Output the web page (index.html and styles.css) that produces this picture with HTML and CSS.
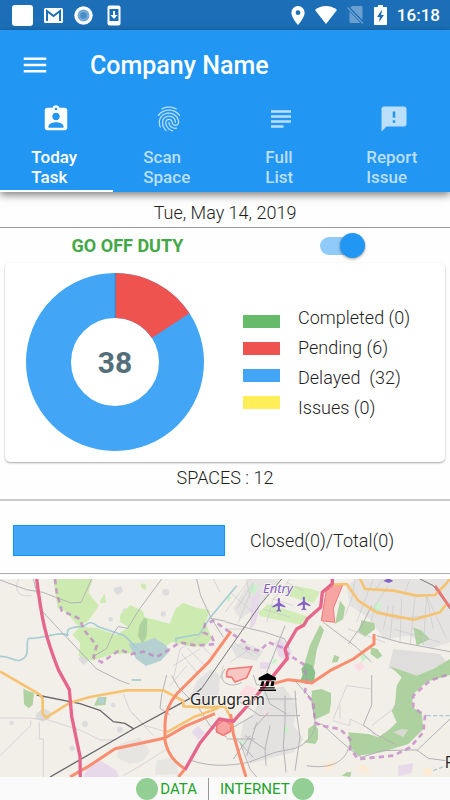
FILE: index.html
```html
<!DOCTYPE html>
<html lang="en">
<head>
<meta charset="utf-8">
<meta name="viewport" content="width=device-width, initial-scale=1">
<title>Company Name</title>
<link rel="stylesheet" href="styles.css">
</head>
<body>
<div class="status">
  <div class="status-group status-left">
    <svg width="21" height="21" viewBox="0 0 21 21"><rect width="21" height="21" rx="3" fill="#fff"/></svg>
    <svg width="19" height="15" viewBox="0 0 19 15"><rect width="19" height="15" rx="1.5" fill="#fff"/><path d="M3 13V3l6.500 5L16 3v10" fill="none" stroke="#1c6fb6" stroke-width="2"/></svg>
    <svg width="19" height="19" viewBox="0 0 19 19"><circle cx="9.500" cy="9.500" r="9.200" fill="#fff"/><circle cx="9.500" cy="9.500" r="6" fill="#75a9d6"/><circle cx="9.500" cy="9.500" r="3.300" fill="#4a8ec9"/></svg>
    <svg width="14" height="21" viewBox="0 0 14 21"><rect x=".5" y=".5" width="13" height="20" rx="2" fill="#fff"/><path d="M2.500 4h9v12h-9z" fill="#1c6fb6"/><path d="M6 6h2v4h2.500L7 14l-3.500-4H6z" fill="#fff"/></svg>
  </div>
  <div class="status-group status-right">
    <svg class="pin" width="14" height="19" viewBox="0 0 14 20"><path fill="#fff" fill-rule="evenodd" d="M7 0a7 7 0 0 0-7 7c0 5 7 13 7 13s7-8 7-13a7 7 0 0 0-7-7zm0 4.500a2.500 2.500 0 1 1 0 5 2.500 2.500 0 0 1 0-5z"/></svg>
    <svg class="wifi" width="22" height="18" viewBox="0 0 22 18"><path fill="#fff" d="M0 4C6-1.300 16-1.300 22 4L11 18z"/></svg>
    <svg class="sim" width="17" height="18" viewBox="0 0 17 18"><path fill="#6b9fd0" d="M3.500 1.700L5 0h9c1 0 1.500.5 1.500 1.500V14zM2.500 5.500l11 11.500H4c-1 0-1.500-.5-1.500-1.500z"/><path d="M.5 1.500l15.500 16" stroke="#6b9fd0" stroke-width="1.300"/></svg>
    <svg class="battery" width="13" height="20" viewBox="0 0 13 20"><path fill="#fff" fill-rule="evenodd" d="M4 0h5v2h3c.6 0 1 .4 1 1v16c0 .6-.4 1-1 1H1c-.6 0-1-.4-1-1V3c0-.6.4-1 1-1h3zM8 4.500L3 12h2.800L5 17l5-7H7.200z"/></svg>
    <span class="clock">16:18</span>
  </div>
</div>
<header class="appbar">
  <div class="toolbar">
    <button class="menu" type="button" aria-label="Menu"><svg width="30" height="30" viewBox="0 0 24 24"><path fill="#fff" d="M3 18h18v-2H3v2zm0-5h18v-2H3v2zm0-7v2h18V6H3z"/></svg></button>
    <h1 class="title">Company Name</h1>
  </div>
  <nav class="tabs">
    <a class="tab active" href="#today"><svg width="30" height="30" viewBox="0 0 24 24"><path d="M19 3h-4.180C14.400 1.840 13.300 1 12 1c-1.300 0-2.400.84-2.820 2H5c-1.100 0-2 .9-2 2v14c0 1.100.9 2 2 2h14c1.100 0 2-.9 2-2V5c0-1.100-.9-2-2-2zm-7 0c.55 0 1 .45 1 1s-.45 1-1 1-1-.45-1-1 .45-1 1-1zm0 4c1.660 0 3 1.340 3 3s-1.340 3-3 3-3-1.340-3-3 1.340-3 3-3zm6 12H6v-1.400c0-2 4-3.100 6-3.100s6 1.100 6 3.100V19z"/></svg><span>Today<br>Task</span></a>
    <a class="tab" href="#scan"><svg width="30" height="30" viewBox="0 0 24 24"><path d="M17.810 4.470c-.08 0-.16-.02-.23-.06C15.660 3.420 14 3 12.010 3c-1.980 0-3.860.47-5.570 1.410-.24.13-.54.04-.68-.2-.13-.24-.04-.55.2-.68C7.820 2.520 9.860 2 12.010 2c2.130 0 3.990.47 6.030 1.520.25.13.34.43.21.67-.09.18-.26.28-.44.28zM3.500 9.720c-.1 0-.2-.03-.29-.09-.23-.16-.28-.47-.12-.7.99-1.400 2.250-2.500 3.750-3.270C9.980 4.040 14 4.030 17.150 5.650c1.500.77 2.760 1.860 3.750 3.250.16.22.11.54-.12.7-.23.16-.54.11-.7-.12-.9-1.260-2.040-2.250-3.390-2.940-2.870-1.470-6.540-1.470-9.400.01-1.360.7-2.500 1.700-3.400 2.960-.08.14-.23.21-.39.21zm6.250 12.070c-.13 0-.26-.05-.35-.15-.87-.87-1.340-1.430-2.010-2.640-.69-1.230-1.050-2.730-1.050-4.340 0-2.970 2.540-5.390 5.660-5.390s5.660 2.420 5.660 5.390c0 .28-.22.5-.5.5s-.5-.22-.5-.5c0-2.420-2.090-4.390-4.660-4.390-2.570 0-4.660 1.970-4.660 4.390 0 1.440.32 2.770.93 3.850.64 1.150 1.080 1.640 1.850 2.420.19.2.19.51 0 .71-.11.1-.24.15-.37.15zm7.170-1.850c-1.190 0-2.240-.3-3.100-.89-1.490-1.010-2.380-2.650-2.380-4.390 0-.28.22-.5.5-.5s.5.22.5.5c0 1.410.72 2.740 1.940 3.560.71.48 1.540.71 2.540.71.24 0 .64-.03 1.040-.1.27-.05.53.13.58.41.05.27-.13.53-.41.58-.57.11-1.070.12-1.210.12zM14.910 22c-.04 0-.09-.01-.13-.02-1.590-.44-2.630-1.030-3.720-2.100-1.400-1.390-2.170-3.240-2.170-5.220 0-1.620 1.380-2.940 3.080-2.940 1.700 0 3.080 1.320 3.080 2.940 0 1.070.93 1.940 2.080 1.940s2.080-.87 2.080-1.940c0-3.770-3.250-6.830-7.250-6.830-2.840 0-5.440 1.580-6.610 4.030-.39.81-.59 1.760-.59 2.800 0 .78.07 2.010.67 3.610.1.26-.03.55-.29.64-.26.1-.55-.04-.64-.29-.49-1.310-.73-2.610-.73-3.960 0-1.200.23-2.290.68-3.240 1.330-2.790 4.280-4.600 7.510-4.600 4.550 0 8.250 3.510 8.250 7.830 0 1.620-1.380 2.940-3.080 2.940s-3.080-1.320-3.080-2.940c0-1.070-.93-1.940-2.080-1.940s-2.080.87-2.080 1.940c0 1.710.66 3.310 1.870 4.510.95.94 1.860 1.460 3.270 1.850.27.07.42.35.35.61-.05.23-.26.38-.47.38z"/></svg><span>Scan<br>Space</span></a>
    <a class="tab" href="#list"><svg width="30" height="30" viewBox="0 0 24 24"><path d="M14 17H4v2h10v-2zm6-8H4v2h16V9zM4 15h16v-2H4v2zM4 5v2h16V5H4z"/></svg><span>Full<br>List</span></a>
    <a class="tab" href="#report"><svg width="30" height="30" viewBox="0 0 24 24"><path d="M20 2H4c-1.100 0-1.990.9-1.990 2L2 22l4-4h14c1.100 0 2-.9 2-2V4c0-1.100-.9-2-2-2zm-7 9h-2V6h2v5zm0 4h-2v-2h2v2z"/></svg><span>Report<br>Issue</span></a>
  </nav>
</header>
<main class="content">
  <p class="date">Tue, May 14, 2019</p>
  <div class="duty">
    <button class="duty-button" type="button">GO OFF DUTY</button>
    <input class="switch" type="checkbox" role="switch" aria-label="On duty" checked>
  </div>
  <section class="card">
    <svg class="donut" width="178" height="178" viewBox="0 0 178 178">
      <circle cx="89" cy="89" r="66.500" fill="none" stroke="#42a5f5" stroke-width="45"/>
      <path fill="#ef5350" d="M89 0A89 89 0 0 1 163.500 40.300L125.800 64.900A44 44 0 0 0 89 45z"/>
      <path d="M89 0v45" stroke="#0a98f0" stroke-width="1"/>
      <text class="donut-total" x="89" y="100" text-anchor="middle">38</text>
    </svg>
    <div class="swatches">
      <span class="swatch green"></span>
      <span class="swatch red"></span>
      <span class="swatch blue"></span>
      <span class="swatch yellow"></span>
    </div>
    <ul class="legend">
      <li>Completed (0)</li>
      <li>Pending (6)</li>
      <li>Delayed&nbsp; (32)</li>
      <li>Issues (0)</li>
    </ul>
  </section>
  <p class="spaces">SPACES : 12</p>
  <section class="progress">
    <div class="bar"></div>
    <p class="progress-text">Closed(0)/Total(0)</p>
  </section>
  <svg class="map" viewBox="0 0 1350 594" preserveAspectRatio="xMidYMid slice" role="img" aria-label="Map of Gurugram">
    <rect width="1350" height="594" fill="#f2efe9"/>
    <!-- built-up land -->
    <g fill="#dfdedd">
      <path d="M750 0h90l-60 80-60 40-20-30zM1040 20l30-20h280v190l-60 20-60-40-80 10-40-60-60-40z" opacity=".7"/>
      <path d="M595 300l40-30 25 20-5 60-45 30-40-30zM690 200l40-10 60 25-20 30-60-10zM790 340l60-20 40 60-10 60 30 40-30 40-60 15-70 20-30-70 10-60 30-20z" opacity=".75"/>
      <path d="M1180 210l50 5 90 10 25 30-45 20-50 20-85-28-5 25z"/>
      <path d="M360 495l60-20 30 40-20 30-40 10-40-20zM470 545l55-10 10 50-70 2z" opacity=".65"/>
    </g>
    <g fill="#dcdbdd">
      <path d="M222 5l20-5 8 20-18 8-14-8zM343 27l20-5 7 14-16 12-12-10zM234 240l22-22 18 20-24 20zM110 402l20-14 22 10-2 20-24 10-20-10z"/>
      <circle cx="497" cy="40" r="10"/><circle cx="375" cy="95" r="7"/><circle cx="237" cy="82" r="10"/><circle cx="490" cy="105" r="8"/><circle cx="570" cy="107" r="9"/><circle cx="400" cy="150" r="11"/><circle cx="478" cy="164" r="9"/><circle cx="270" cy="160" r="7"/><circle cx="332" cy="121" r="7"/><circle cx="216" cy="508" r="8"/><circle cx="255" cy="435" r="9"/><circle cx="340" cy="378" r="7"/><circle cx="35" cy="432" r="7"/><circle cx="360" cy="452" r="9"/><circle cx="225" cy="449" r="6"/>
    </g>
    <g fill="#e7d9e9"><path d="M260 570l40-26 48 30 10 20H250zM575 460l20-20 20 22-20 20zM755 60l22-30v70l-14 40-14 10zM1195 560l45-8-5 30-40 10zM825 190l20-10 30 40-10 30-30-20zM780 250h30v20h-30z"/></g>
    <g fill="#fbdce0"><path d="M720 340l20-22 30 10-15 30-35 10zM1062 258l20-10 12 16-18 14zM790 400l12-6 5 15-12 5z"/></g>
    <path fill="#fdebd3" d="M970 555l35-12-5 30-20-2zM1070 565l25-8 15 20-20 5zM1270 565l30 5-5 20-25-5z"/>
    <!-- woods and parks -->
    <g fill="#cdebb0">
      <path d="M160 0h118l-13 41 32 39-32 45-28 18-40-45-24-10z"/>
      <path d="M240 143l50 4 60 21 35-23-26-17 2-22 30-28 38 18 5 18 75 20 18-45 22-18 42 16 40 7-15 35 20 50-19 20-40 5-60-15-50 30-95 5-30 0-66 21-40-15 5-38-24-25z"/>
      <path d="M775 100l30-25 125 40-20 24-130-28zM865 18l60 10 35 10-20 35-85-25z" opacity=".9"/>
      <path d="M302 63l12-20 4 28-18 2zM422 14l14 0 4 20-14-6z"/>
    </g>
    <g fill="#aed1a0">
      <path d="M418 140l14-24 10 5-2 50-12 24-14-24zM70 328l8 6 24 8-4 36-12 10-14-12z"/>
      <path d="M282 380l12-26 26 0-4 24z"/>
      <path d="M1020 65l15 20-5 35-25 15zM1085 124l38 8 2 18-30 23-20-15zM1240 145l25 10 25 25-40 20zM1112 205l20 5 15 20-15 10-20-15z"/>
      <path d="M960 138l12 15-22 60-8 50-30-5 18-60z"/>
      <path d="M935 335l30-5 28 12v30l-5 30-43 20-10-40zM912 490l12-10 0-30 20-15 10 15 0 30-8 15z"/>
      <path d="M1170 262l80 28 50-20 50-30v48l-70 20-40 37-5 40 30 15 5 50-45 45-80 25-70 10-25-25-5-45 60 5 30 10 35-25 20-20-15-35 10-20 5-55 15-25-35-33z"/>
      <path d="M1025 590l15-10h15l-5 14zM1003 228l15 5-5 15-18 3z"/>
    </g>
    <path d="M1180 460l25-10 20 2-15 22z" fill="#d9dbd2"/>
    <path fill="#8ac18a" d="M918 252l20 8 8 20-4 30-20 5-22-8 8-20-4-18z"/>
    <g fill="#c9f2cc"><path d="M755 15l18 5-8 25-20-10zM680 50l15 5-10 15zM1125 75l20-5-5 25-20 5zM820 240l12 0-5 12-12 5zM850 440l12 0 5 20-15 5zM1080 220l25 15-20 15zM717 490l15-5 5 8-15 7zM1320 80l15 10-15 15z"/></g>
    <g fill="#b5d0d0"><path d="M385 195l45-5 33-14 35 23 10 18-25 28-45 16-30-22zM295 355l18 0 0 20-18-4zM395 300h28v6h-28z"/></g>
    <path d="M0 232c30-2 40 16 58 12 40-10 15-56 28-66 40 4 100-26 118-7-10-30 20-24 48-30 20-16 25-10 43 2l75 26c20 10 25 30 45 40M528 190l0-12 70-12 32-50 35-42 45-54" fill="none" stroke="#a5cdd2" stroke-width="5"/>
    <path d="M1280 410h70M1300 575l50-20" fill="none" stroke="#a5cdd2" stroke-width="4" stroke-dasharray="12 7"/>
    <!-- minor streets -->
    <g fill="none" stroke="#c9c9cb" stroke-width="2">
      <path d="M55 0c-12 30-5 55 40 50M0 417h90l45 6M92 425v15L20 510 0 530M118 430v50h12v114M135 420l110 35 55 28h40M370 345l20 50 70 75M370 590l60-35 70-45M395 400l40 40 70 20M640 0l20 40"/>
      <path d="M675 100l45-60 30-40M690 40l70 60M710 90l50-80M675 150h60M760 20l-45 110M740 0l10 60M800 130l20-70 50-60M820 60l60 20M790 90l80 25M860 10l50 25"/>
      <path d="M1035 110l20-50 10-60M1070 130l30-80 20-50M1110 140l15-60 40-60M1150 150l15-70M1170 180l10-100M1200 190l5-130M1230 200l15-150M1270 200l10-150M1300 150l-20-100M1340 180l-60-130M1080 70l110 50 90-10M1045 150l110 40M1180 150l140 40M1150 0l-30 40M1230 0l-15 40"/>
      <path d="M520 300l20-90 40-25 30-20M545 225l50 60M560 205l60 60M590 185l50 50M520 260l80-50M510 320l50-60M690 250l60-40 30 20M700 190l60 40M660 300l10-40"/>
      <path d="M1040 320l-40 100M1040 320l75 10M1000 425l50 15 0-20 60 30 15 20M1115 440l90-70M1020 420v-40"/>
    </g>
    <g fill="none" stroke="#b3b3b6" stroke-width="3">
      <path d="M0 3l80 29 48 8 85 32 30-2L275 0M485 0l-65 88-37 60-28-5-15 20-20 45-40 25M125 95l70 75 95 100 70 35 28 10M100 0l12 48M590 0l12 50 30 65 38 60M632 118l43 8"/>
      <path d="M500 288l-15 60-5 40 30 20M515 290l20 35 60 60 35 55 50 35"/>
      <path d="M675 128l70 20 48 11 60 20 15 30M970 130l100 75 45 45M1115 80l-30 60-40 55M1130 170l70 20 150 28M855 140l-35 90-20 50"/>
      <path d="M675 270c-30 40 20 60 50 40M760 288l10 30 50 0M790 325l20 50 50 30M720 370l60 40h120M800 360h90M690 450l70-40M810 440l-15 70 3 50M735 470l60 40M855 350v80l-5 70 8 80M700 470l60 65M760 450l45-50M885 335l5 70 10 70-15 100M720 490l30 80 20 24M770 430l-30 100M700 540l50-70M680 480l85 0"/>
      <path d="M575 545c60 20 120 15 170 5l80-30 60-12c30-10 60-40 60-70l20-3 50 45 40 35 30 20 60-20 85-2 20 0 35 25 60 8 20 10M1115 288l0 90-25 60 40 30 60 30M1250 515l100-95M920 560c60 10 110-5 125-50M880 300l55 60 12 80"/>
    </g>
    <path d="M110 348l130 26 60 20 40 34 35 5 25 16M150 594L400 450l170-92 35-30" fill="none" stroke="#68686b" stroke-width="4"/>
    <path d="M605 328l70-100 105-150L845 0M1260 0l40 20 50 70" fill="none" stroke="#777779" stroke-width="3"/>
    <!-- administrative boundary -->
    <path d="M165 0l5 40 15 55 55 25 10 30 40 50-10 35 25 15 55-38 35 13 35-7 40 16 40-24 30-20 50 10 55-5-10-23-25-12 5-25 25-10 50 35 45 30 5 18 40 7 25-25 40 15 25 25 40 25 10 40-5 45 25 30 5 60 20 10 55 10 30 30v30l25 30 105-10 50-25 40-45 5-50-35-25v-35l50-45 60-20" fill="none" stroke="#c184c4" stroke-opacity=".75" stroke-width="8" stroke-dasharray="16 12"/>
    <!-- built attractions -->
    <g fill="#f7a5a3" stroke="#f27976" stroke-width="3">
      <path d="M978 38l24-20h26l-28 70 4 42-40-5z"/>
      <path d="M680 280l5-10 70-7-15 33-35 13-10-14-15-2z" fill="#f9c7c3" stroke-width="5"/>
      <path d="M650 440l20-18 24 15-2 20-22 12-20-10z" stroke-width="5"/>
    </g>
    <!-- main roads -->
    <path d="M0 277l120 70 8 12 0 45 10 12 72-45 60-17 110-20h110l60 32v16l75 3 50-3 20 40M500 460l80-45 75-28M1000 17l40-2 35 50 55 36 110 21 80-22 20-25M1080 0l15 30 85 5 70 15 55-2 30-30 15-18" fill="none" stroke="#f6c373" stroke-width="8" stroke-linejoin="round"/>
    <g fill="none" stroke="#f88d70" stroke-width="9" stroke-linejoin="round">
      <path d="M210 594l60-35 75-50 150-32 60-35 90-38M693 157l-65 90-98 98c-25 30-35 55-35 90v50c10 45 30 65 60 85l-20 24M1122 165v30l-62 45-70 35-55 37-35-6-35-4-45 12M692 405l8 60 20 70 18 59"/>
      <path d="M1305 20l45 65" stroke="#ee7775" stroke-width="8"/>
    </g>
    <g fill="none" stroke="#e5668a" stroke-width="10" stroke-linejoin="round">
      <path d="M110 0c15 120 25 170 65 272l33 60 7 80 25 120 1 62"/>
      <path d="M997 0l0 14-30 26-5 45-40 35-10 18-22 12-35 60 7 28-42 52-55 65-65 72-42-7-58 72-45 80"/>
    </g>
    <!-- places -->
    <g fill="#8461c4">
      <path transform="translate(813 53) scale(2.050)" d="M21 16v-2l-8-5V3.500c0-.83-.67-1.500-1.500-1.500S10 2.670 10 3.500V9l-8 5v2l8-2.500V19l-2 1.500V22l3.500-1 3.500 1v-1.500L13 19v-5.500l8 2.500z"/>
      <path transform="translate(888 49) scale(2.050)" d="M21 16v-2l-8-5V3.500c0-.83-.67-1.500-1.500-1.500S10 2.670 10 3.500V9l-8 5v2l8-2.500V19l-2 1.500V22l3.500-1 3.500 1v-1.500L13 19v-5.500l8 2.500z"/>
      <path d="M1150 6l10-6h10l10 6-14 6z"/>
    </g>
    <path transform="translate(776 282) scale(1 .93)" d="M26 0L0 15v8h52v-8zM9 27l-4 15h9l3-15zm14 0l-3 15h9l3-15zm15 0l-2 15h9l2-15zM4 46h44v4H4zM0 53h52v5H0z"/>
    <text class="map-label entry" x="789" y="42">Entry</text>
    <text class="map-label city" x="570" y="377">Gurugram</text>
    <text class="map-label city" x="1334" y="567">F</text>
  </svg>
</main>
<footer class="footer">
  <span class="signal"><i class="dot"></i>DATA</span>
  <span class="signal internet">INTERNET<i class="dot"></i></span>
</footer>
</body>
</html>
```

FILE: styles.css
```css
* { box-sizing: border-box; }
body {
  margin: 0;
  min-height: 100vh;
  display: flex;
  flex-direction: column;
  background: #fefefe;
  color: #1f1f1f;
  font-family: Roboto, "Liberation Sans", sans-serif;
  font-size: 18px;
}
p, h1, ul { margin: 0; padding: 0; }
button { border: 0; padding: 0; background: none; font: inherit; }
svg { display: block; flex: none; }

.status {
  height: 30px;
  padding: 0 10px 0 12px;
  display: flex;
  justify-content: space-between;
  background: #1c6fb6;
}
.status-group { display: flex; align-items: center; }
.status-left { gap: 11px; }
.status-left svg:last-child { margin-left: 3px; }
.status-right { gap: 10px; }
.clock { color: #fff; font-size: 17px; font-weight: 500; }

.appbar {
  position: relative;
  background: #2196f3;
  color: #fff;
  box-shadow: 0 3px 8px rgba(0, 0, 0, .5);
}
.toolbar { height: 70px; display: flex; align-items: center; padding: 0 20px; gap: 40px; }
.menu { width: 30px; height: 30px; cursor: pointer; }
.title { padding-top: 2px; font-size: 25px; font-weight: 500; line-height: 30px; }
.tabs { display: grid; grid-template-columns: repeat(4, 1fr); }
.tab {
  display: flex;
  flex-direction: column;
  align-items: center;
  gap: 13px;
  padding: 4px 0 3px;
  border-bottom: 2px solid transparent;
  color: #bcdffb;
  fill: #bcdffb;
  font-size: 17px;
  font-weight: 500;
  line-height: 20px;
  text-decoration: none;
}
.tab span { padding-right: 4px; }
.tab.active { color: #fff; fill: #fff; border-color: #fff; }

.content { flex: 1; display: flex; flex-direction: column; }
.date {
  padding: 11px 0 4px;
  border-bottom: 1px solid #999;
  line-height: 20px;
  text-align: center;
}
.date, .legend, .spaces, .progress-text { font-weight: 300; }
.duty {
  height: 35px;
  padding-left: 20px;
  display: grid;
  grid-template-columns: 1fr 1fr;
  align-items: center;
  justify-items: center;
}
.duty-button { color: #43a847; font-weight: 700; cursor: pointer; }
.switch {
  appearance: none;
  position: relative;
  width: 45px;
  height: 18px;
  margin: 0;
  border-radius: 9px;
  background: #90caf9;
  cursor: pointer;
}
.switch::before {
  content: "";
  position: absolute;
  right: 0;
  top: -4px;
  width: 25px;
  height: 25px;
  border-radius: 50%;
  background: #2196f3;
  box-shadow: 0 1px 3px rgba(0, 0, 0, .4);
}
.card {
  margin: 0 5px;
  padding: 10px 21px 11px;
  display: flex;
  align-items: center;
  border-radius: 5px;
  background: #fff;
  box-shadow: 0 1px 2px rgba(0, 0, 0, .35);
}
.donut-total { fill: #546e7a; font-size: 30px; font-weight: 700; }
.swatches { margin: 0 18px 0 39px; display: grid; gap: 14px; }
.swatch { width: 37px; height: 13px; }
.green { background: #66bb6a; }
.red { background: #ef5350; }
.blue { background: #42a5f5; }
.yellow { background: #ffee58; }
.legend { padding-top: 2px; list-style: none; line-height: 30px; }
.spaces {
  padding: 6px 0 11px;
  border-bottom: 2px solid #ccc;
  line-height: 20px;
  text-align: center;
}
.progress {
  padding: 24px 13px 17px;
  display: grid;
  grid-template-columns: 1fr 1fr;
  align-items: center;
  border-bottom: 1px solid #aaa;
}
.bar { height: 31px; background: #42a5f5; border: 1px solid #0a98f8; }
.progress-text { padding-left: 25px; white-space: nowrap; }
.map { width: 100%; height: 198px; margin-top: 5px; flex: 1 0 auto; }
.map-label { font-family: "Noto Sans", sans-serif; paint-order: stroke; stroke: #f8f5f0; stroke-width: 5px; }
.entry { fill: #8461c4; font-size: 39px; font-style: italic; }
.city { fill: #222; font-size: 46px; }

.footer {
  height: 23px;
  display: flex;
  align-items: center;
  justify-content: center;
  background: #fafafa;
  color: #21a329;
  font-size: 15px;
}
.signal { display: flex; align-items: center; gap: 2px; padding-right: 11px; }
.internet { padding: 0 0 0 11px; border-left: 1px solid #999; }
.dot { width: 22px; height: 22px; border-radius: 50%; background: #93ce94; }
```
